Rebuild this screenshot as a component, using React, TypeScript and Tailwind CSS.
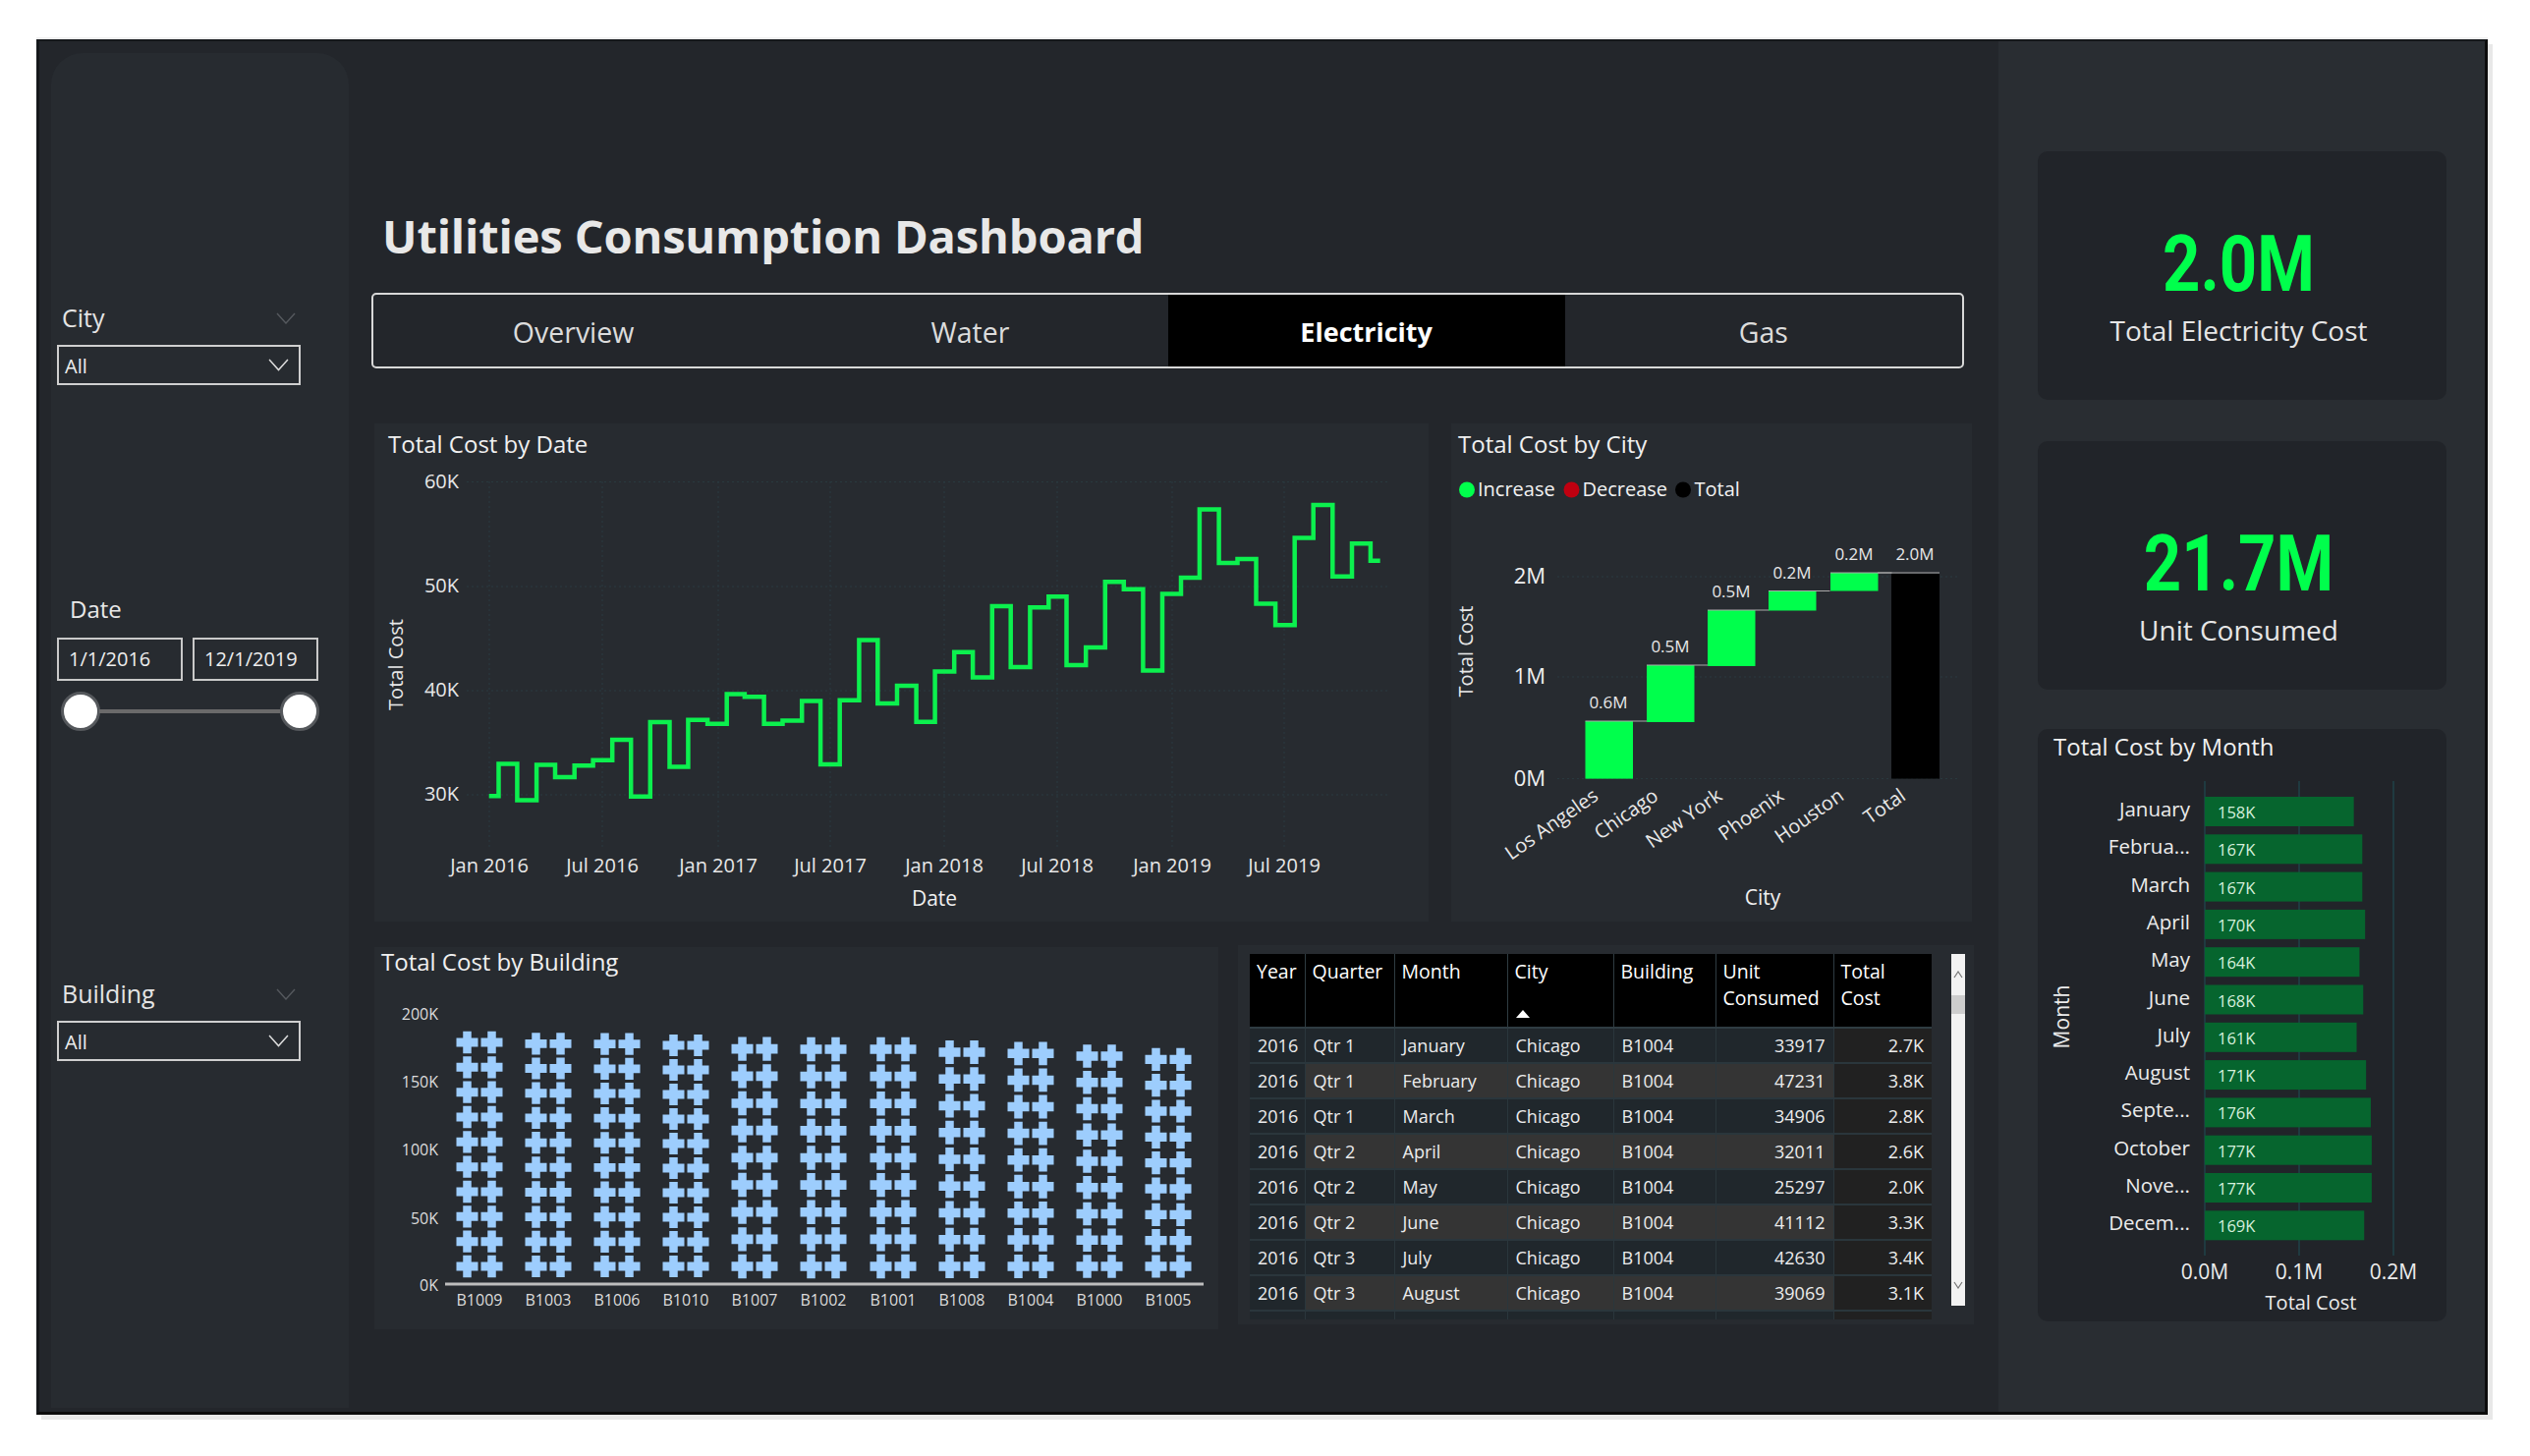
import React from "react";

const GREEN = "#00ff4c";
const lineVals = [1133,1038,1146,1041,1077,1043,1027,967,1135,915,1047,908,920,832,840,920,910,852,1040,850,672,860,807,914,765,708,783,572,752,576,544,746,694,500,522,762,536,488,286,444,433,565,628,370,273,484,387,438];
const lineXs = [182,196,223,251,278,306,333,361,388,416,444,471,499,527,553,581,608,636,663,691,719,746,774,802,829,857,884,912,939,967,994,1020,1048,1076,1103,1131,1159,1186,1213,1241,1268,1295,1323,1351,1378,1406,1434,1461,1475];
const lx = (z: number) => 370 + z / 1.4255;
const ly = (z: number) => 420 + z / 2.904;
function linePath() {
  let d = `M${lx(lineXs[0]).toFixed(1)} ${ly(lineVals[0]).toFixed(1)}`;
  lineVals.forEach((v, i) => {
    d += ` V${ly(v).toFixed(1)} H${lx(lineXs[i + 1]).toFixed(1)}`;
  });
  return d;
}

function Chevron({ color, w = 20 }: { color: string; w?: number }) {
  return (
    <svg width={w} height={w * 0.6} viewBox="0 0 20 12" fill="none" className="block shrink-0">
      <polyline points="1,1 10,11 19,1" stroke={color} strokeWidth="1.4" />
    </svg>
  );
}

function Slicer({ title, cls }: { title: string; cls: string }) {
  return (
    <div className={cls}>
      <div className="flex items-center justify-between w-[248px] pl-[5px] pr-[5px] h-[40px] text-[25px] text-[#e4e4e4]">
        <span>{title}</span>
        <Chevron color="#55595e" />
      </div>
      <div className="mt-[7px] w-[248px] h-[41px] border-2 border-[#cfcfcf] flex items-center justify-between pl-[6px] pr-[10px] text-[20px] text-[#eeeeee]">
        <span className="pt-[2px]">All</span>
        <Chevron color="#dddddd" w={21} />
      </div>
    </div>
  );
}

function Sidebar() {
  return (
    <div className="ml-[12px] mt-[12px] w-[303px] h-[1379px] bg-[#272b30] rounded-t-[32px] pl-[6px] pt-[250px] shrink-0">
      <Slicer title="City" cls="" />
      <div className="mt-[208px] ml-[13px] text-[24px] text-[#e8e8e8] leading-[40px]">Date</div>
      <div className="flex gap-[10px] mt-[9px]">
        <div className="w-[128px] h-[44px] border-2 border-[#c9c9c9] flex items-center pl-[10px] text-[20px] text-[#eeeeee]">1/1/2016</div>
        <div className="w-[128px] h-[44px] border-2 border-[#c9c9c9] flex items-center pl-[10px] text-[20px] text-[#eeeeee]">12/1/2019</div>
      </div>
      <div className="mt-[11px] ml-[4px] w-[263px] flex items-center">
        <div className="w-[40px] h-[40px] rounded-full bg-white border-[3px] border-[#55585c] shrink-0" />
        <div className="flex-1 h-[4px] bg-[#6a6a6a] -mx-[1px]" />
        <div className="w-[40px] h-[40px] rounded-full bg-white border-[3px] border-[#55585c] shrink-0" />
      </div>
      <Slicer title="Building" cls="mt-[248px]" />
    </div>
  );
}

const tabs = [
  { t: "Overview", c: "text-[28.5px] text-[#dcdcdc] pl-[3px]" },
  { t: "Water", c: "text-[28.5px] text-[#dcdcdc] pl-[2px]" },
  { t: "Electricity", c: "text-[27px] bg-black text-white font-bold" },
  { t: "Gas", c: "text-[28.5px] text-[#dcdcdc]" },
];

function Card({ cls, title, titleCls, children }: { cls: string; title: string; titleCls: string; children: React.ReactNode }) {
  return (
    <div className={`bg-[#272b30] shrink-0 ${cls}`}>
      <div className={`flex items-center text-[#f0f0f0] text-[24px] ${titleCls}`}>{title}</div>
      {children}
    </div>
  );
}

function DateChart() {
  const ys: [string, number][] = [["60K", 490.6], ["50K", 597], ["40K", 703], ["30K", 809]];
  const xs: [string, number][] = [["Jan 2016", 498], ["Jul 2016", 613], ["Jan 2017", 731], ["Jul 2017", 845], ["Jan 2018", 961], ["Jul 2018", 1076], ["Jan 2019", 1193], ["Jul 2019", 1307]];
  return (
    <svg width="1073" height="463" className="block">
      <g transform="translate(-381,-475)" fontFamily="'Open Sans',sans-serif">
        {ys.map(([l, y]) => (
          <g key={l}>
            <line x1="475" x2="1415" y1={y} y2={y} stroke="#2b3b40" strokeWidth="1" strokeDasharray="2 3" />
            <text x="467" y={y + 6} textAnchor="end" fontSize="20" fill="#e8e8e8">{l}</text>
          </g>
        ))}
        {xs.map(([l, x]) => (
          <g key={l}>
            <line x1={x} x2={x} y1="490" y2="864" stroke="#2b3b40" strokeWidth="1" strokeDasharray="2 3" />
            <text x={x} y="888" textAnchor="middle" fontSize="20" fill="#e8e8e8">{l}</text>
          </g>
        ))}
        <path d={linePath()} fill="none" stroke="#0cf04e" strokeWidth="4.5" />
        <text x="951" y="922" textAnchor="middle" fontSize="21" fill="#f0f0f0">Date</text>
        <text transform="translate(410,676.5) rotate(-90)" textAnchor="middle" fontSize="20" fill="#e8e8e8">Total Cost</text>
      </g>
    </svg>
  );
}

function CityChart() {
  const bars = [
    { x: 1613.5, y1: 734, y2: 792.6, lx: 1637, ly: 715, t: "0.6M" },
    { x: 1676, y1: 677, y2: 735, lx: 1700, ly: 658, t: "0.5M" },
    { x: 1738, y1: 621, y2: 678, lx: 1762, ly: 602, t: "0.5M" },
    { x: 1800, y1: 601.5, y2: 621.5, lx: 1824, ly: 582.5, t: "0.2M" },
    { x: 1863, y1: 583, y2: 601.5, lx: 1887, ly: 564, t: "0.2M" },
  ];
  const names: [string, number][] = [["Los Angeles", 1628], ["Chicago", 1689], ["New York", 1754], ["Phoenix", 1817], ["Houston", 1878], ["Total", 1941]];
  return (
    <svg width="530" height="463" className="block">
      <g transform="translate(-1477,-475)" fontFamily="'Open Sans',sans-serif">
        <circle cx="1493" cy="498.5" r="8" fill={GREEN} />
        <text x="1504" y="505" fontSize="20" fill="#f2f2f2">Increase</text>
        <circle cx="1599.5" cy="498.5" r="8" fill="#c00010" />
        <text x="1610.5" y="505" fontSize="20" fill="#f2f2f2">Decrease</text>
        <circle cx="1713" cy="498.5" r="8" fill="#000" />
        <text x="1724.5" y="505" fontSize="20" fill="#f2f2f2">Total</text>
        {[["2M", 587], ["1M", 689], ["0M", 792.6]].map(([l, y]) => (
          <g key={l as string}>
            <line x1="1585" x2="1995" y1={y as number} y2={y as number} stroke="#2b3b40" strokeDasharray="2 3" />
            <text x="1573" y={(y as number) + 7} textAnchor="end" fontSize="22" fill="#f0f0f0">{l}</text>
          </g>
        ))}
        {bars.map((b, i) => (
          <g key={i}>
            <rect x={b.x} y={b.y1} width="48.5" height={b.y2 - b.y1} fill={GREEN} />
            <line x1={b.x} x2={b.x + 62.5} y1={b.y1} y2={b.y1} stroke="#a9a9a9" strokeWidth="1.2" />
            <text x={b.lx} y={b.ly + 6} textAnchor="middle" fontSize="17" fill="#e8e8e8">{b.t}</text>
          </g>
        ))}
        <rect x="1925" y="584" width="49" height="208.6" fill="#000" />
        <line x1="1911" x2="1974" y1="583" y2="583" stroke="#a9a9a9" strokeWidth="1.2" />
        <text x="1949" y="570" textAnchor="middle" fontSize="17" fill="#e8e8e8">2.0M</text>
        {names.map(([n, x]) => (
          <text key={n} transform={`translate(${x},813) rotate(-35)`} textAnchor="end" fontSize="20" fill="#e8e8e8">{n}</text>
        ))}
        <text x="1794" y="921" textAnchor="middle" fontSize="21" fill="#f0f0f0">City</text>
        <text transform="translate(1499,663) rotate(-90)" textAnchor="middle" fontSize="20" fill="#e8e8e8">Total Cost</text>
      </g>
    </svg>
  );
}

const bldg: [string, number, number, number][] = [
  ["B1009", 488, 333, 10], ["B1003", 558, 337, 10], ["B1006", 628, 338, 10], ["B1010", 698, 342, 10],
  ["B1007", 768, 353, 9], ["B1002", 838, 354, 9], ["B1001", 909, 354, 9], ["B1008", 979, 363, 9],
  ["B1004", 1049, 367, 9], ["B1000", 1119, 375, 9], ["B1005", 1189, 385, 9],
];

function crossPath(cx: number, cy: number, h: number) {
  const w = 22, aw = 8.5, ah = h * 0.4;
  const l = cx - w / 2, r = cx + w / 2, t = cy - h / 2, b = cy + h / 2;
  return `M${cx - aw / 2} ${t}H${cx + aw / 2}V${cy - ah / 2}H${r}V${cy + ah / 2}H${cx + aw / 2}V${b}H${cx - aw / 2}V${cy + ah / 2}H${l}V${cy - ah / 2}H${cx - aw / 2}Z`;
}

function BuildingChart() {
  const ys: [string, number][] = [["200K", 1034], ["150K", 1103], ["100K", 1172], ["50K", 1242], ["0K", 1310]];
  return (
    <svg width="859" height="355" className="block">
      <g transform="translate(-381,-998)" fontFamily="'Open Sans',sans-serif">
        {ys.map(([l, y]) => (
          <text key={l} x="446" y={y + 4} textAnchor="end" fontSize="16" fill="#dcdcdc">{l}</text>
        ))}
        {bldg.map(([n, x, top, rows]) => {
          const t = 950 + top / 3;
          const bottom = 950 + 1017 / 3;
          const pitch = (bottom - t) / (rows - 1);
          const h = pitch * 0.88;
          const paths: string[] = [];
          for (let i = 0; i < rows; i++) {
            paths.push(crossPath(x - 12.5, t + pitch * i, h));
            paths.push(crossPath(x + 12.5, t + pitch * i, h));
          }
          return (
            <g key={n}>
              <path d={paths.join(" ")} fill="#9dcdfd" />
              <text x={x} y="1329" textAnchor="middle" fontSize="16" fill="#dcdcdc">{n}</text>
            </g>
          );
        })}
        <line x1="453" x2="1225" y1="1307" y2="1307" stroke="#bdbdbd" strokeWidth="3" />
      </g>
    </svg>
  );
}

const rowsData: [string, string, string, string][] = [
  ["Qtr 1", "January", "33917", "2.7K"],
  ["Qtr 1", "February", "47231", "3.8K"],
  ["Qtr 1", "March", "34906", "2.8K"],
  ["Qtr 2", "April", "32011", "2.6K"],
  ["Qtr 2", "May", "25297", "2.0K"],
  ["Qtr 2", "June", "41112", "3.3K"],
  ["Qtr 3", "July", "42630", "3.4K"],
  ["Qtr 3", "August", "39069", "3.1K"],
];

function DataTable() {
  const th = "align-top text-left font-normal pl-[7px] pr-0 pt-[4px] leading-[27px] text-[19.5px] whitespace-nowrap border-r border-[#2f3c42] border-b-2";
  return (
    <div className="w-[694px] h-[372px] overflow-hidden">
      <table className="w-[694px] table-fixed border-collapse text-[18px] text-[#ececec]">
        <thead>
          <tr className="bg-black h-[75px] text-white">
            <th className={`${th} w-[56px]`}>Year</th>
            <th className={`${th} w-[91px]`}>Quarter</th>
            <th className={`${th} w-[115px]`}>Month</th>
            <th className={`${th} w-[108px]`}>
              <div>City</div>
              <div className="mt-[26px] ml-[1px] w-0 h-0 border-x-[7px] border-x-transparent border-b-[8px] border-b-white" />
            </th>
            <th className={`${th} w-[104px]`}>Building</th>
            <th className={`${th} w-[120px]`}>Unit<br />Consumed</th>
            <th className={`${th} w-[100px] border-r-0`}>Total<br />Cost</th>
          </tr>
        </thead>
        <tbody>
          {rowsData.map((r, i) => {
            const even = i % 2 === 1;
            const td = `border-r border-b-2 border-[#2a363c] pl-[8px] ${even ? "bg-[#343434]" : "bg-[#20272c]"}`;
            return (
              <tr key={r[1]} className="h-[36px]">
                <td className="border-r border-b-2 border-[#2a363c] pl-[8px] bg-[#20272c]">2016</td>
                <td className={td}>{r[0]}</td>
                <td className={td}>{r[1]}</td>
                <td className={td}>Chicago</td>
                <td className={td}>B1004</td>
                <td className={`${td} text-right pr-[8px]`}>{r[2]}</td>
                <td className="border-b-2 border-[#2a363c] text-right pr-[8px] bg-[#212121]">{r[3]}</td>
              </tr>
            );
          })}
          <tr className="h-[36px]">
            {[0, 1, 2, 3, 4, 5, 6].map((i) => (
              <td key={i} className={`${i === 6 ? "bg-[#212121]" : "bg-[#20272c] border-r border-[#2a363c]"}`}>&nbsp;</td>
            ))}
          </tr>
        </tbody>
      </table>
    </div>
  );
}

function Scrollbar() {
  return (
    <div className="w-[14px] h-[358px] bg-[#f2f2f2] flex flex-col items-center">
      <svg width="10" height="8" viewBox="0 0 10 8" className="mt-[17px] block"><polyline points="1,7 5,1 9,7" fill="none" stroke="#777" strokeWidth="1.2" /></svg>
      <div className="mt-[17px] w-full h-[19px] bg-[#cdcdcd]" />
      <div className="flex-1" />
      <svg width="10" height="8" viewBox="0 0 10 8" className="mb-[17px] block"><polyline points="1,1 5,7 9,1" fill="none" stroke="#777" strokeWidth="1.2" /></svg>
    </div>
  );
}

function Kpi({ value, label, cls }: { value: string; label: string; cls: string }) {
  return (
    <div className={`h-[253px] bg-[#212429] rounded-[10px] flex flex-col items-center justify-start pr-[7px] ${cls}`}>
      <div className="font-['Roboto',sans-serif] font-bold text-[67px] leading-[72px] scale-y-[1.2] text-[#00ff4c]">{value}</div>
      <div className="text-[28px] leading-[36px] text-[#e6e6e6] mt-[14px]">{label}</div>
    </div>
  );
}

function MonthChart() {
  const vals = [158, 167, 167, 170, 164, 168, 161, 171, 176, 177, 177, 169];
  const labels = ["January", "Februa...", "March", "April", "May", "June", "July", "August", "Septe...", "October", "Nove...", "Decem..."];
  return (
    <svg width="416" height="566" className="block">
      <g transform="translate(-2074,-778)" fontFamily="'Open Sans',sans-serif">
        {[2244, 2340, 2436].map((x) => (
          <line key={x} x1={x} x2={x} y1="795" y2="1278" stroke="#1f3a40" strokeWidth="2" />
        ))}
        {vals.map((v, i) => {
          const y = 811 + i * 38.3;
          return (
            <g key={i}>
              <rect x="2244" y={y} width={v * 0.96} height="30" fill="#06652e" />
              <text x="2257" y={y + 22} fontSize="16.5" fill="#d5f0dc">{v}K</text>
              <text x="2229" y={y + 20} textAnchor="end" fontSize="20.5" fill="#ececec">{labels[i]}</text>
            </g>
          );
        })}
        {[["0.0M", 2244], ["0.1M", 2340], ["0.2M", 2436]].map(([l, x]) => (
          <text key={l as string} x={x as number} y="1302" textAnchor="middle" fontSize="21" fill="#ececec">{l}</text>
        ))}
        <text x="2352" y="1333" textAnchor="middle" fontSize="20" fill="#ececec">Total Cost</text>
        <text transform="translate(2106,1035) rotate(-90)" textAnchor="middle" fontSize="21" fill="#ececec">Month</text>
      </g>
    </svg>
  );
}

export default function App() {
  return (
    <div className="w-[2575px] h-[1482px] bg-white overflow-hidden pl-[37px] pt-[40px] font-['Open_Sans',sans-serif]">
      <div className="w-[2495px] h-[1400px] flex bg-[#23262b] border-t-2 border-t-[#15181b] border-b-[3px] border-b-[#0c0c0c] border-r-[3px] border-r-[#0c0c0c] border-l-[3px] border-l-[#15181b] shadow-[5px_5px_0_#e8e8e8,0_-2px_0_#eeeeee]">
        <Sidebar />
        <div className="w-[1679px] shrink-0 pl-[26px]">
          <div className="h-[257px] flex items-end pl-[8px] pb-[29px]">
            <h1 className="text-[47px] leading-[60px] font-bold text-[#e8e8e8] tracking-[-0.003em]">Utilities Consumption Dashboard</h1>
          </div>
          <div className="w-[1621px] -ml-[3px] -mt-[1px] h-[77px] border-2 border-[#d8d8d8] rounded-[5px] flex overflow-hidden">
            {tabs.map((t) => (
              <div key={t.t} className={`w-1/4 flex items-center justify-center pt-[4px] ${t.c}`}>{t.t}</div>
            ))}
          </div>
          <div className="flex gap-[23px] mt-[56px]">
            <Card cls="w-[1073px] h-[507px]" title="Total Cost by Date" titleCls="h-[44px] pl-[14px] pb-[3px]"><DateChart /></Card>
            <Card cls="w-[530px] h-[507px]" title="Total Cost by City" titleCls="h-[44px] pl-[7px] pb-[3px]"><CityChart /></Card>
          </div>
          <div className="flex gap-[20px] mt-[26px] items-start">
            <Card cls="w-[859px] h-[389px]" title="Total Cost by Building" titleCls="h-[34px] pl-[7px] pb-[4px]"><BuildingChart /></Card>
            <div className="w-[749px] h-[386px] bg-[#272b30] -mt-[2px] pl-[12px] pt-[9px] flex gap-[20px] shrink-0">
              <DataTable />
              <Scrollbar />
            </div>
          </div>
        </div>
        <div className="flex-1 bg-[#292d32] pl-[40px] pt-[112px]">
          <Kpi value="2.0M" label="Total Electricity Cost" cls="w-[416px] pt-[78px]" />
          <Kpi value="21.7M" label="Unit Consumed" cls="w-[416px] mt-[42px] pt-[88px]" />
          <div className="mt-[40px] w-[416px] h-[603px] bg-[#212429] rounded-[10px]">
            <div className="h-[36px] flex items-center pl-[16px] text-[24px] text-[#f0f0f0]">Total Cost by Month</div>
            <MonthChart />
          </div>
        </div>
      </div>
    </div>
  );
}
